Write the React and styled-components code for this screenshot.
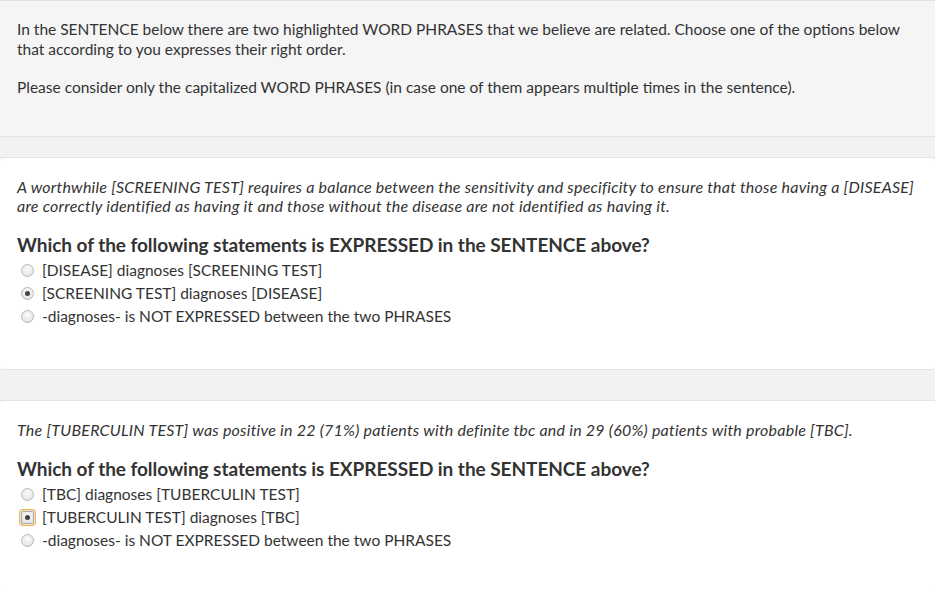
import React from "react";
import styled, { createGlobalStyle } from "styled-components";

const GlobalStyle = createGlobalStyle`
  body {
    margin: 0;
    background: #f2f2f2;
    font-family: Lato, "Open Sans", sans-serif;
    color: #333;
  }
`;

const Page = styled.div`
  display: flex;
  flex-direction: column;
  border-top: 1px solid #e2e2e2;
`;

const Intro = styled.div`
  background: #f5f5f5;
  border-bottom: 1px solid #e3e3e3;
  padding: 19px 17px 38px;
  font-size: 15.5px;
  line-height: 19.5px;
  p {
    margin: 0 0 19px;
  }
  p:last-child {
    margin: 0;
  }
`;

const Gap = styled.div`
  height: ${(p) => p.h}px;
  background: #f2f2f2;
  border-bottom: 1px solid #e4e4e4;
`;

const Panel = styled.div`
  background: #fff;
  border-radius: 4px;
  padding: 19px 17px ${(p) => p.pb}px;
  border-bottom: 1px solid #e4e4e4;
`;

const Sentence = styled.p`
  margin: 0;
  font-size: 16px;
  font-style: italic;
  line-height: 19px;
  letter-spacing: 0.23px;
`;

const Question = styled.h3`
  margin: 18px 0 2px;
  font-size: 19px;
  font-weight: 700;
  line-height: 24px;
  letter-spacing: -0.05px;
`;

const Options = styled.div`
  display: flex;
  flex-direction: column;
`;

const Option = styled.label`
  display: flex;
  align-items: center;
  height: 23px;
  font-size: 15.5px;
  color: #333;
`;

const Radio = styled.span`
  position: relative;
  box-sizing: border-box;
  width: 13px;
  height: 13px;
  margin: 0 8px 0 4px;
  border-radius: 50%;
  border: 1px solid #b9b9b9;
  background: radial-gradient(circle at 50% 35%, #fdfdfd 0%, #e6e6e6 70%, #d8d8d8 100%);
  &::after {
    content: "";
    display: ${(p) => (p.checked ? "block" : "none")};
    position: absolute;
    left: 3px;
    top: 3px;
    width: 5px;
    height: 5px;
    border-radius: 50%;
    background: #444;
  }
  ${(p) =>
    p.focused &&
    `
    box-shadow: 0 0 0 1px #f6e7c8, 0 0 0 2px #eab15a;
    border-radius: 2px;
    border-color: #aaa;
  `}
`;

const sections = [
  {
    sentence:
      "A worthwhile [SCREENING TEST] requires a balance between the sensitivity and specificity to ensure that those having a [DISEASE] are correctly identified as having it and those without the disease are not identified as having it.",
    options: [
      "[DISEASE] diagnoses [SCREENING TEST]",
      "[SCREENING TEST] diagnoses [DISEASE]",
      "-diagnoses- is NOT EXPRESSED between the two PHRASES",
    ],
    checked: 1,
    focused: false,
    pb: 41,
    gap: 30,
  },
  {
    sentence:
      "The [TUBERCULIN TEST] was positive in 22 (71%) patients with definite tbc and in 29 (60%) patients with probable [TBC].",
    options: [
      "[TBC] diagnoses [TUBERCULIN TEST]",
      "[TUBERCULIN TEST] diagnoses [TBC]",
      "-diagnoses- is NOT EXPRESSED between the two PHRASES",
    ],
    checked: 1,
    focused: true,
    pb: 40,
    gap: 0,
  },
];

export default function App() {
  return (
    <>
      <GlobalStyle />
      <Page>
        <Intro>
          <p>
            In the SENTENCE below there are two highlighted WORD PHRASES that we believe are related. Choose one of
            the options below that according to you expresses their right order.
          </p>
          <p>
            Please consider only the capitalized WORD PHRASES (in case one of them appears multiple times in the
            sentence).
          </p>
        </Intro>
        <Gap h={20} />
        {sections.map((s, i) => (
          <React.Fragment key={i}>
            <Panel pb={s.pb}>
              <Sentence>{s.sentence}</Sentence>
              <Question>Which of the following statements is EXPRESSED in the SENTENCE above?</Question>
              <Options>
                {s.options.map((o, j) => (
                  <Option key={j}>
                    <Radio checked={s.checked === j} focused={s.focused && s.checked === j} />
                    {o}
                  </Option>
                ))}
              </Options>
            </Panel>
            {s.gap > 0 && <Gap h={s.gap} />}
          </React.Fragment>
        ))}
      </Page>
    </>
  );
}
